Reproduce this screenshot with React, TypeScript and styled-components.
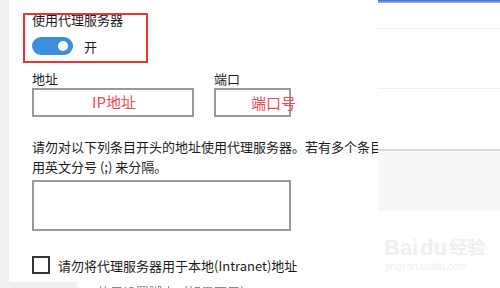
import React from "react";
import styled, { createGlobalStyle } from "styled-components";

const Global = createGlobalStyle`
  html, body { margin: 0; padding: 0; background: #ffffff; }
  body { font-family: "Noto Sans CJK SC", "Noto Sans", sans-serif; }
`;

const Page = styled.div`
  width: 500px;
  height: 288px;
  overflow: hidden;
  display: flex;
  background: #ffffff;
`;

const Dialog = styled.div`
  width: 378px;
  flex: none;
  display: flex;
  flex-direction: column;
`;

const DialogBody = styled.div`
  height: 282px;
  flex: none;
  display: flex;
  overflow: hidden;
`;

const SideStrip = styled.div`
  width: 9px;
  flex: none;
  background: #f1f1f1;
`;

const Content = styled.div`
  position: relative;
  flex: 1;
  background: #ffffff;
  padding-left: 23px;
  display: flex;
  flex-direction: column;
  color: #1b1b1b;
  font-size: 13px;
  white-space: nowrap;
  overflow: hidden;
`;

const Title = styled.div`
  margin-top: 10px;
  line-height: 20px;
`;

const ToggleRow = styled.div`
  margin-top: 6px;
  height: 20px;
  display: flex;
  align-items: center;
  gap: 11px;
`;

const Toggle = styled.div`
  width: 41px;
  height: 18px;
  border-radius: 9px;
  background: #3c8fe0;
  display: flex;
  align-items: center;
  justify-content: flex-end;
  padding-right: 5px;
  box-sizing: border-box;
`;

const Knob = styled.div`
  width: 10px;
  height: 10px;
  border-radius: 50%;
  background: #ffffff;
`;

const FieldsRow = styled.div`
  margin-top: 14px;
  display: flex;
  gap: 20px;
`;

const Field = styled.div`
  display: flex;
  flex-direction: column;
`;

const Label = styled.div`
  line-height: 18px;
`;

const Box = styled.div<{ $w: number; $h: number }>`
  width: ${(p) => p.$w}px;
  height: ${(p) => p.$h}px;
  box-sizing: border-box;
  border: 2px solid #9a9a9a;
  background: #ffffff;
`;

const Paragraph = styled.div`
  margin-top: 20px;
  line-height: 20px;
`;

const TextArea = styled(Box)`
  margin-top: 3px;
`;

const CheckRow = styled.div`
  margin-top: 25px;
  height: 18px;
  display: flex;
  align-items: center;
  gap: 8px;
`;

const CheckBox = styled.div`
  width: 18px;
  height: 18px;
  box-sizing: border-box;
  border: 2px solid #333333;
  flex: none;
`;

const RedFrame = styled.div`
  position: absolute;
  left: 14px;
  top: 13px;
  width: 125px;
  height: 50px;
  box-sizing: border-box;
  border: 2px solid #e8353c;
`;

const Note = styled.span<{ $x: number; $y: number }>`
  position: absolute;
  left: ${(p) => p.$x}px;
  top: ${(p) => p.$y}px;
  color: #ee4a52;
  font-size: 15px;
  line-height: 20px;
`;

const Footer = styled.div`
  flex: 1;
  display: flex;
  overflow: hidden;
`;

const FooterGray = styled.div`
  width: 77px;
  background: #f0f0f0;
`;

const FooterText = styled.div`
  flex: 1;
  background: #ffffff;
  padding-left: 20px;
  font-size: 13px;
  line-height: 13px;
  padding-top: 3px;
  color: #8a8a8a;
  white-space: nowrap;
  filter: blur(0.6px);
`;

const Backdrop = styled.div`
  flex: 1;
  display: flex;
  flex-direction: column;
  background: #ffffff;
`;

const BlueBar = styled.div`
  height: 3px;
  background: linear-gradient(#3d6bd0, #9fb6e8);
`;

const Section = styled.div<{ $h: number; $line?: boolean }>`
  height: ${(p) => p.$h}px;
  border-bottom: 1px solid ${(p) => (p.$line === false ? "transparent" : "#efefef")};
`;

const GrayBand = styled.div`
  height: 60px;
  border-top: 2px solid #d9d9d9;
  background: #f6f7f9;
`;

const Watermark = styled.div`
  margin-top: 24px;
  margin-left: 6px;
  display: flex;
  flex-direction: column;
  color: #efefef;
  font-family: "Liberation Sans", "Noto Sans CJK SC", sans-serif;
`;

const WmTop = styled.div`
  font-size: 22px;
  font-weight: bold;
  line-height: 26px;
  display: flex;
  align-items: center;
  gap: 2px;
`;

const WmSmall = styled.span`
  font-size: 18px;
`;

const WmSub = styled.div`
  font-size: 10px;
  line-height: 12px;
  padding-left: 2px;
`;

export default function App() {
  return (
    <Page>
      <Global />
      <Dialog>
        <DialogBody>
          <SideStrip />
          <Content>
            <Title>使用代理服务器</Title>
            <ToggleRow>
              <Toggle>
                <Knob />
              </Toggle>
              <span>开</span>
            </ToggleRow>
            <FieldsRow>
              <Field>
                <Label>地址</Label>
                <Box $w={162} $h={29} />
              </Field>
              <Field>
                <Label>端口</Label>
                <Box $w={77} $h={29} />
              </Field>
            </FieldsRow>
            <Paragraph>
              请勿对以下列条目开头的地址使用代理服务器。若有多个条目
              <br />
              用英文分号 (;) 来分隔。
            </Paragraph>
            <TextArea $w={259} $h={51} />
            <CheckRow>
              <CheckBox />
              <span>请勿将代理服务器用于本地(Intranet)地址</span>
            </CheckRow>
            <RedFrame />
            <Note $x={83} $y={92}>IP地址</Note>
            <Note $x={242} $y={93}>端口号</Note>
          </Content>
        </DialogBody>
        <Footer>
          <FooterGray />
          <FooterText>使用设置脚本（如果可用）</FooterText>
        </Footer>
      </Dialog>
      <Backdrop>
        <BlueBar />
        <Section $h={25} />
        <Section $h={59} />
        <Section $h={59} $line={false} />
        <GrayBand />
        <Watermark>
          <WmTop>
            <span>Bai</span>
            <span>du</span>
            <WmSmall>经验</WmSmall>
          </WmTop>
          <WmSub>jingyan.baidu.com</WmSub>
        </Watermark>
      </Backdrop>
    </Page>
  );
}
